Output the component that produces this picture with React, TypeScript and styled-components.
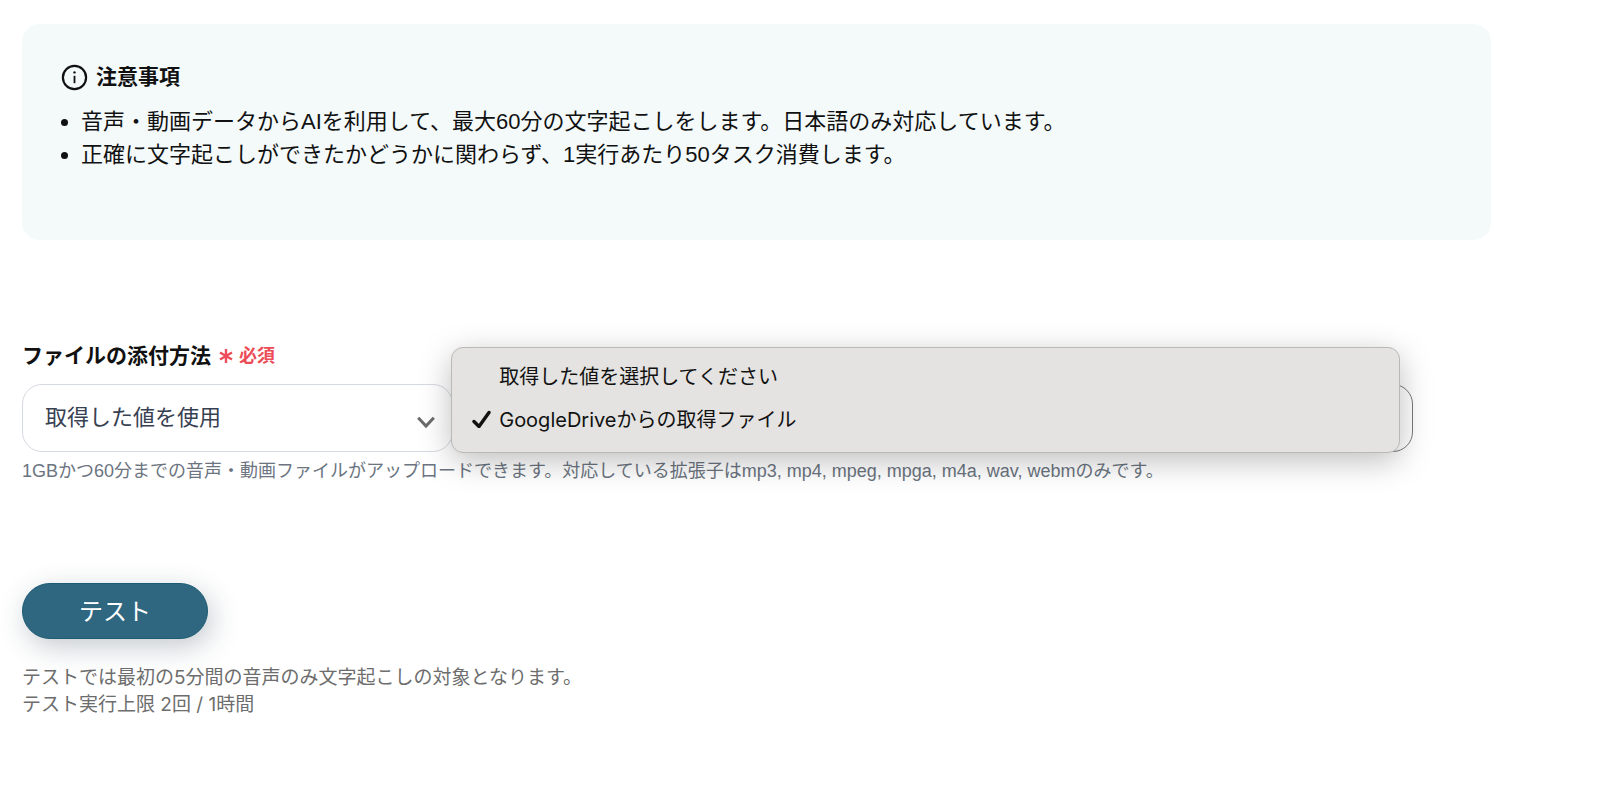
import React, { useState } from "react";
import styled, { createGlobalStyle } from "styled-components";

const GlobalStyle = createGlobalStyle`
  *, *::before, *::after { box-sizing: border-box; }
  body {
    margin: 0;
    background: #fff;
    color: #111;
    font-family: "Liberation Sans", "Noto Sans CJK JP", sans-serif;
  }
`;

const Page = styled.main`
  padding: 24px 109px 24px 22px;
`;

const Notice = styled.section`
  min-height: 216px;
  padding: 37px 39px;
  border-radius: 18px;
  background: #f4fafa;
`;

const NoticeTitle = styled.h2`
  display: flex;
  align-items: center;
  gap: 8px;
  margin: 0 0 12px;
  font-size: 21px;
  line-height: 32px;
  font-weight: 700;
`;

const NoticeList = styled.ul`
  margin: 0;
  padding: 0 0 0 20px;
  font-size: 22px;
  line-height: 33px;
`;

const Field = styled.section`
  margin-top: 99px;
  padding-right: 78px;
`;

const LabelRow = styled.div`
  display: flex;
  align-items: center;
  gap: 8px;
  line-height: 34px;
`;

const FieldLabel = styled.label`
  font-size: 21px;
  font-weight: 700;
`;

const Required = styled.span`
  display: flex;
  align-items: center;
  gap: 6px;
  color: #ec4d58;
  font-size: 18px;
  font-weight: 700;
`;

const Selects = styled.div`
  display: flex;
  margin-top: 11px;
`;

const SelectBox = styled.div<{ $basis: string }>`
  position: relative;
  flex: 0 0 ${(p) => p.$basis};
`;

const Select = styled.select<{ $active?: boolean }>`
  display: block;
  appearance: none;
  width: 100%;
  height: 68px;
  padding: 0 48px 2px 22px;
  border: 1px solid ${(p) => (p.$active ? "#7a7a7a" : "#d5d9e0")};
  border-radius: 20px;
  background: #fff;
  color: #374151;
  font-family: inherit;
  font-size: 22px;
`;

const Chevron = styled.svg`
  position: absolute;
  right: 18px;
  top: 32px;
  pointer-events: none;
`;

const Menu = styled.div`
  position: absolute;
  z-index: 1;
  top: -37px;
  left: -2px;
  right: 13px;
  padding: 6px 0 12px;
  border: 1px solid #b9b9b8;
  border-radius: 12px;
  background: #e4e3e1;
  box-shadow: 0 8px 32px rgba(0, 0, 0, 0.26);
`;

const MenuItem = styled.button`
  display: grid;
  grid-template-columns: 19px 1fr;
  column-gap: 8px;
  align-items: center;
  width: 100%;
  height: 43px;
  padding: 0 20px;
  border: 0;
  background: transparent;
  color: #111;
  font-family: Inter, "Noto Sans CJK JP", sans-serif;
  font-size: 20px;
  text-align: left;
`;

const Help = styled.p`
  margin: 6px 0 0;
  color: #6b7480;
  font-size: 18px;
  line-height: 27px;
`;

const TestButton = styled.button`
  display: block;
  width: 186px;
  height: 56px;
  margin-top: 98px;
  padding: 0 0 4px;
  border: 1px solid #1d5c73;
  border-radius: 28px;
  background: #2f6780;
  color: #fff;
  font-family: inherit;
  font-size: 24px;
  box-shadow: 4px 8px 28px rgba(30, 50, 70, 0.26);
`;

const TestNote = styled.p`
  margin: 25px 0 0;
  color: #6d6d6d;
  font-family: Inter, "Noto Sans CJK JP", sans-serif;
  font-size: 19px;
  line-height: 27px;
`;

const fileOptions = ["取得した値を選択してください", "GoogleDriveからの取得ファイル"];

export default function App() {
  const [file, setFile] = useState(fileOptions[1]);
  return (
    <Page lang="ja">
      <GlobalStyle />
      <Notice>
        <NoticeTitle>
          <svg width="27" height="27" viewBox="0 0 27 27" fill="none" stroke="#111" aria-hidden="true">
            <circle cx="13.5" cy="13.5" r="11.6" strokeWidth="2.2" />
            <path d="M13.5 11.8v7.4" strokeWidth="1.8" />
            <circle cx="13.5" cy="8.4" r="1.2" fill="#111" stroke="none" />
          </svg>
          注意事項
        </NoticeTitle>
        <NoticeList>
          <li>音声・動画データからAIを利用して、最大60分の文字起こしをします。日本語のみ対応しています。</li>
          <li>正確に文字起こしができたかどうかに関わらず、1実行あたり50タスク消費します。</li>
        </NoticeList>
      </Notice>

      <Field>
        <LabelRow>
          <FieldLabel htmlFor="method">ファイルの添付方法</FieldLabel>
          <Required>
            <svg width="14" height="16" viewBox="0 0 14 16" stroke="#ec4d58" strokeWidth="2.4" aria-hidden="true">
              <path d="M7 1v14M1 4.5l12 7M13 4.5l-12 7" />
            </svg>
            必須
          </Required>
        </LabelRow>
        <Selects>
          <SelectBox $basis="31%">
            <Select id="method">
              <option>取得した値を使用</option>
            </Select>
            <Chevron width="18" height="13" viewBox="0 0 18 13" fill="none" stroke="#6b6b6b" strokeWidth="3" aria-hidden="true">
              <path d="M1.2 1.7L9 10l7.8-8.3" />
            </Chevron>
          </SelectBox>
          <SelectBox $basis="69%">
            <Select $active aria-label="取得した値" value={file} onChange={(e) => setFile(e.target.value)}>
              {fileOptions.map((o) => (
                <option key={o}>{o}</option>
              ))}
            </Select>
            <Menu role="listbox">
              {fileOptions.map((o) => (
                <MenuItem key={o} type="button" role="option" aria-selected={o === file} onClick={() => setFile(o)}>
                  {o === file ? (
                    <svg width="19" height="19" viewBox="0 0 19 19" fill="none" stroke="#111" strokeWidth="3.4" strokeLinecap="round" strokeLinejoin="round" aria-hidden="true">
                      <path d="M2 12.5l5 5L17 3.5" />
                    </svg>
                  ) : (
                    <span />
                  )}
                  {o}
                </MenuItem>
              ))}
            </Menu>
          </SelectBox>
        </Selects>
        <Help>
          1GBかつ60分までの音声・動画ファイルがアップロードできます。対応している拡張子はmp3, mp4, mpeg, mpga, m4a, wav, webmのみです。
        </Help>
      </Field>

      <TestButton type="button">テスト</TestButton>
      <TestNote>
        テストでは最初の5分間の音声のみ文字起こしの対象となります。
        <br />
        テスト実行上限 2回 / 1時間
      </TestNote>
    </Page>
  );
}
